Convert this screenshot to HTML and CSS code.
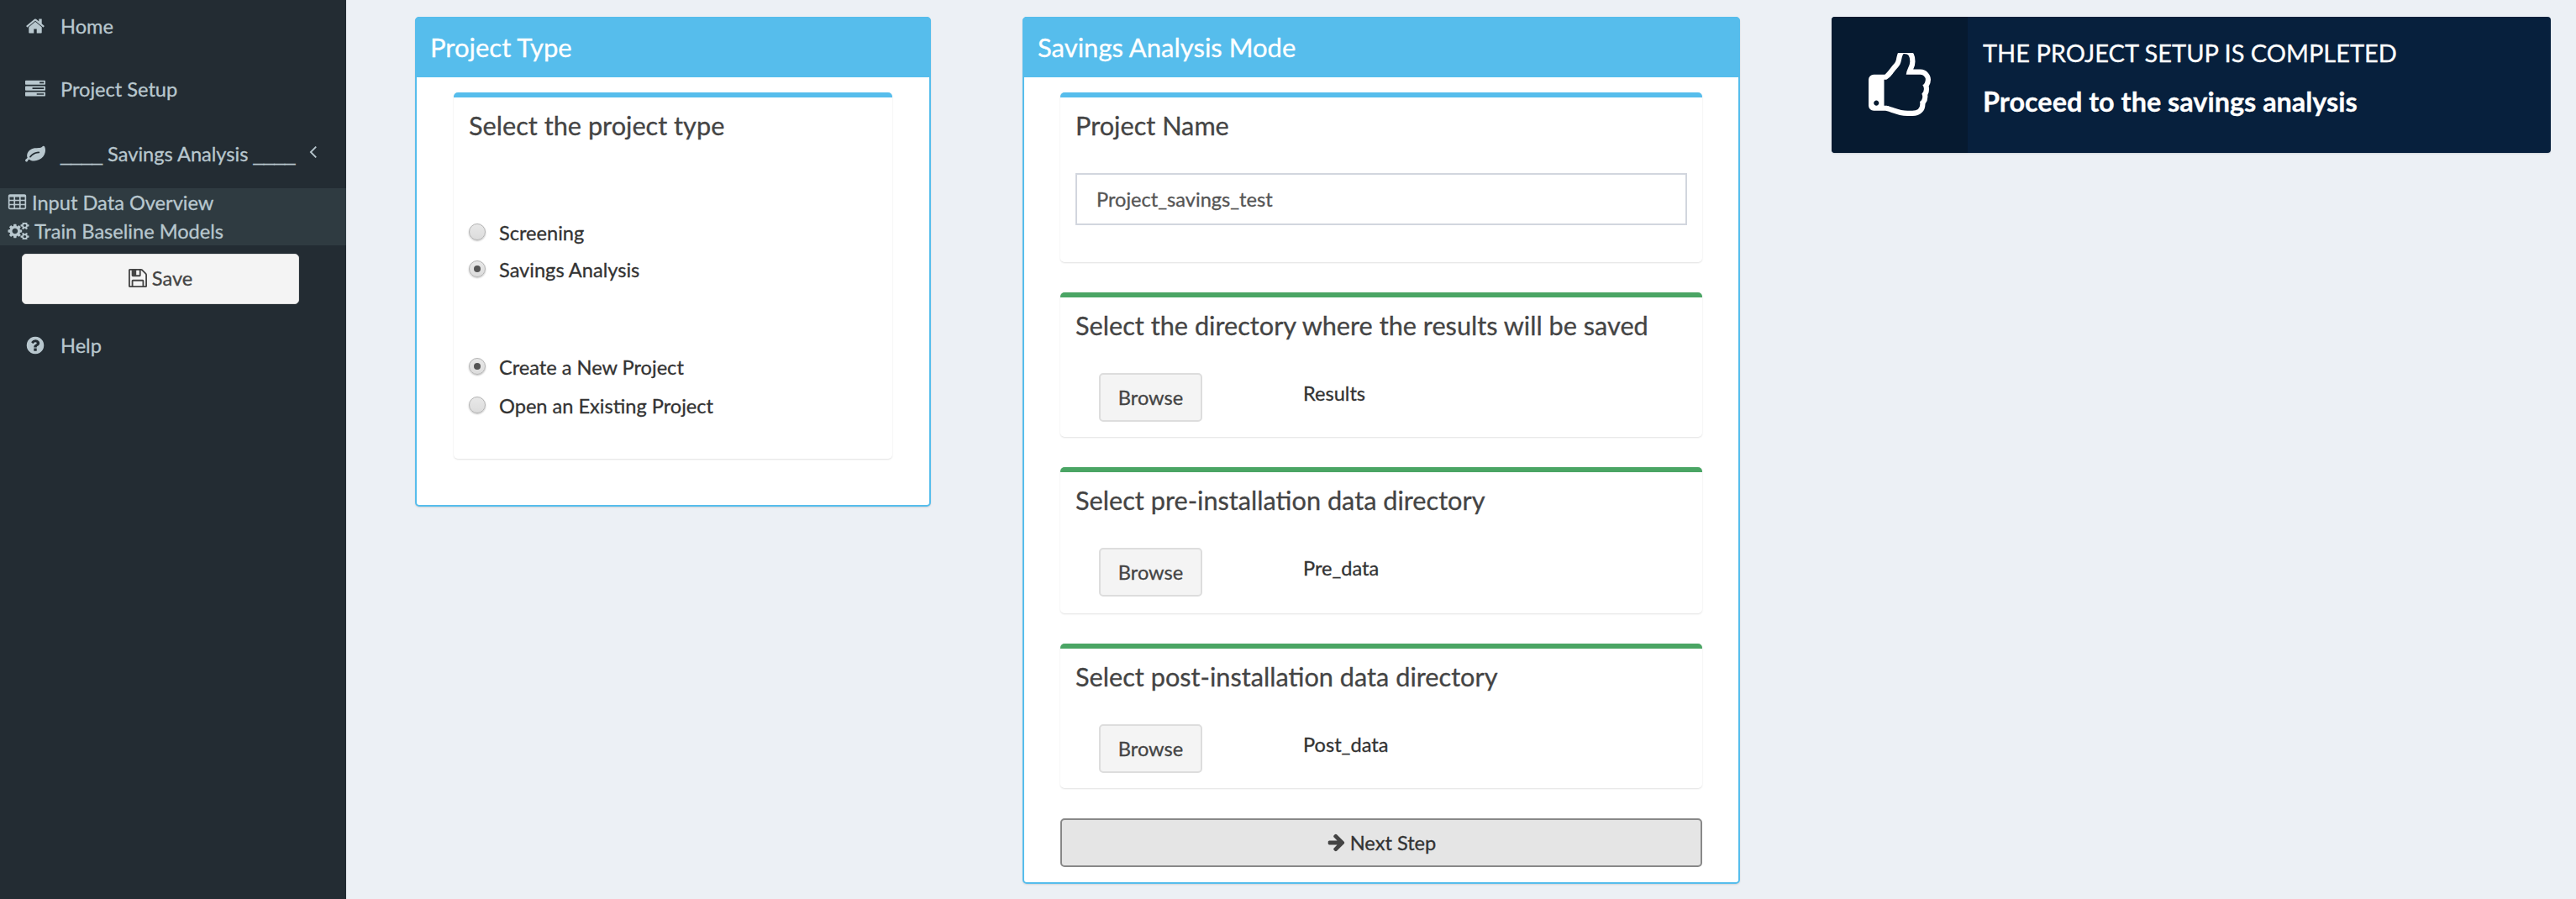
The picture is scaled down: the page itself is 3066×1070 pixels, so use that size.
FILE: index.html
```html
<!DOCTYPE html>
<html lang="en">
<head>
  <meta charset="UTF-8">
  <meta name="viewport" content="width=device-width, initial-scale=1">
  <title>Savings Analysis</title>
  <link rel="stylesheet" href="styles.css">
</head>
<body>
  <!-- sidebar -->
  <aside class="sidebar">
    <a class="menu-item item-home">
      <span class="menu-icon"><svg class="icon" viewBox="0 0 1792 1792"><path d="M1472 992v480q0 26-19 45t-45 19h-384v-384h-256v384h-384q-26 0-45-19t-19-45v-480q0-1 .5-3t.5-3l575-474 575 474q1 2 1 6zm223-69l-62 74q-8 9-21 11h-3q-13 0-21-7l-692-577-692 577q-12 8-24 7-13-2-21-11l-62-74q-8-10-7-23.500t11-21.500l719-599q32-26 76-26t76 26l244 204v-195q0-14 9-23t23-9h192q14 0 23 9t9 23v408l219 182q10 8 11 21.500t-7 23.500z"/></svg></span>
      Home
    </a>
    <a class="menu-item item-setup">
      <span class="menu-icon"><svg class="icon" viewBox="0 0 1792 1792"><path d="M1024 1408h640v-128h-640v128zm-384-512h1024v-128h-1024v128zm640-512h384v-128h-384v128zm512 832v256q0 26-19 45t-45 19h-1664q-26 0-45-19t-19-45v-256q0-26 19-45t45-19h1664q26 0 45 19t19 45zm0-512v256q0 26-19 45t-45 19h-1664q-26 0-45-19t-19-45v-256q0-26 19-45t45-19h1664q26 0 45 19t19 45zm0-512v256q0 26-19 45t-45 19h-1664q-26 0-45-19t-19-45v-256q0-26 19-45t45-19h1664q26 0 45 19t19 45z"/></svg></span>
      Project Setup
    </a>
    <a class="menu-item item-savings">
      <span class="menu-icon"><svg class="icon" viewBox="0 0 1792 1792"><path d="M1280 704q0-26-19-45t-45-19q-172 0-318 49.500t-259.500 134-235.500 219.500q-19 21-19 45 0 26 19 45t45 19q24 0 45-19 27-24 74-71t67-66q137-124 268.500-176t313.500-52q26 0 45-19t19-45zm512-198q0 95-20 193-46 224-184.500 383t-357.500 268q-214 108-438 108-148 0-286-47-15-5-88-42t-96-37q-16 0-39.500 32t-45 70-52.500 70-60 32q-30 0-51-11t-31-24-27-42q-2-4-6-11t-5.500-10-3-9.500-1.500-13.500q0-35 31-73.500t68-65.500 68-56 31-48q0-4-14-38t-16-44q-9-51-9-104 0-115 43.500-220t119-184.500 170.500-139 204-95.500q55-18 145-25.500t179.500-9 178.500-6 163.500-24 113.500-56.500l29.500-29.500 29.500-28 27-20 36.500-16 43.500-4.500q39 0 70.500 46t47.500 112 24 124 8 96z"/></svg></span>
      <span class="savings-label"><span class="rule">____</span> Savings Analysis <span class="rule">____</span></span>
      <svg class="chevron" viewBox="576 384 640 1152"><path d="M1203 544q0 13-10 23l-393 393 393 393q10 10 10 23t-10 23l-50 50q-10 10-23 10t-23-10l-466-466q-10-10-10-23t10-23l466-466q10-10 23-10t23 10l50 50q10 10 10 23z"/></svg>
    </a>
    <div class="submenu">
      <a class="sub-item">
        <svg class="sub-icon table-icon" viewBox="0 128 1792 1536"><path d="M576 1376v-192q0-14-9-23t-23-9h-320q-14 0-23 9t-9 23v192q0 14 9 23t23 9h320q14 0 23-9t9-23zm0-384v-192q0-14-9-23t-23-9h-320q-14 0-23 9t-9 23v192q0 14 9 23t23 9h320q14 0 23-9t9-23zm512 384v-192q0-14-9-23t-23-9h-320q-14 0-23 9t-9 23v192q0 14 9 23t23 9h320q14 0 23-9t9-23zm-512-768v-192q0-14-9-23t-23-9h-320q-14 0-23 9t-9 23v192q0 14 9 23t23 9h320q14 0 23-9t9-23zm512 384v-192q0-14-9-23t-23-9h-320q-14 0-23 9t-9 23v192q0 14 9 23t23 9h320q14 0 23-9t9-23zm512 384v-192q0-14-9-23t-23-9h-320q-14 0-23 9t-9 23v192q0 14 9 23t23 9h320q14 0 23-9t9-23zm-512-768v-192q0-14-9-23t-23-9h-320q-14 0-23 9t-9 23v192q0 14 9 23t23 9h320q14 0 23-9t9-23zm512 384v-192q0-14-9-23t-23-9h-320q-14 0-23 9t-9 23v192q0 14 9 23t23 9h320q14 0 23-9t9-23zm0-384v-192q0-14-9-23t-23-9h-320q-14 0-23 9t-9 23v192q0 14 9 23t23 9h320q14 0 23-9t9-23zm128-320v1088q0 66-47 113t-113 47h-1344q-66 0-113-47t-47-113v-1088q0-66 47-113t113-47h1344q66 0 113 47t47 113z"/></svg>
        Input Data Overview
      </a>
      <a class="sub-item">
        <svg class="sub-icon cogs-icon" viewBox="0 128 1920 1536"><path d="M896 896q0-106-75-181t-181-75-181 75-75 181 75 181 181 75 181-75 75-181zm768 512q0-52-38-90t-90-38-90 38-38 90q0 53 37.500 90.500t90.500 37.500 90.500-37.500 37.500-90.500zm0-1024q0-52-38-90t-90-38-90 38-38 90q0 53 37.500 90.500t90.500 37.500 90.500-37.500 37.500-90.500zm-384 421v185q0 10-7 19.500t-16 10.500l-155 24q-11 35-32 76 34 48 90 115 7 11 7 20 0 12-7 19-23 30-82.500 89.500t-78.500 59.500q-11 0-21-7l-115-90q-37 19-77 31-11 108-23 155-7 24-30 24h-186q-11 0-20-7.500t-10-17.500l-23-153q-34-10-75-31l-118 89q-7 7-20 7-11 0-21-8-144-133-144-160 0-9 7-19 10-14 41-53t47-61q-23-44-35-82l-152-24q-10-1-17-9.500t-7-19.500v-185q0-10 7-19.500t16-10.500l155-24q11-35 32-76-34-48-90-115-7-11-7-20 0-12 7-20 22-30 82-89t79-59q11 0 21 7l115 90q34-18 77-32 11-108 23-154 7-24 30-24h186q11 0 20 7.500t10 17.500l23 153q34 10 75 31l118-89q8-7 20-7 11 0 21 8 144 133 144 160 0 8-7 19-12 16-42 54t-45 60q23 48 34 82l152 23q10 2 17 10.500t7 19.500zm640 533v140q0 16-149 31-12 27-30 52 51 113 51 138 0 4-4 7-122 71-124 71-8 0-46-47t-52-68q-20 2-30 2t-30-2q-14 21-52 68t-46 47q-2 0-124-71-4-3-4-7 0-25 51-138-18-25-30-52-149-15-149-31v-140q0-16 149-31 13-29 30-52-51-113-51-138 0-4 4-7 4-2 35-20t59-34 30-16q8 0 46 46.500t52 67.500q20-2 30-2t30 2q51-71 92-112l6-2q4 0 124 70 4 3 4 7 0 25-51 138 17 23 30 52 149 15 149 31zm0-1024v140q0 16-149 31-12 27-30 52 51 113 51 138 0 4-4 7-122 71-124 71-8 0-46-47t-52-68q-20 2-30 2t-30-2q-14 21-52 68t-46 47q-2 0-124-71-4-3-4-7 0-25 51-138-18-25-30-52-149-15-149-31v-140q0-16 149-31 13-29 30-52-51-113-51-138 0-4 4-7 4-2 35-20t59-34 30-16q8 0 46 46.500t52 67.500q20-2 30-2t30 2q51-71 92-112l6-2q4 0 124 70 4 3 4 7 0 25-51 138 17 23 30 52 149 15 149 31z"/></svg>
        Train Baseline Models
      </a>
    </div>
    <button class="save-btn">
      <svg class="btn-icon" viewBox="0 128 1536 1536"><path d="M384 1536h768v-384h-768v384zm896 0h128v-896q0-14-10-38.500t-20-34.500l-281-281q-10-10-34-20t-39-10v416q0 40-28 68t-68 28h-576q-40 0-68-28t-28-68v-416h-128v1280h128v-416q0-40 28-68t68-28h832q40 0 68 28t28 68v416zm-384-928v-320q0-13-9.500-22.500t-22.500-9.500h-192q-13 0-22.500 9.500t-9.500 22.500v320q0 13 9.500 22.500t22.500 9.500h192q13 0 22.500-9.500t9.500-22.500zm640 32v928q0 40-28 68t-68 28h-1344q-40 0-68-28t-28-68v-1344q0-40 28-68t68-28h928q40 0 88 20t76 48l280 280q28 28 48 76t20 88z"/></svg>
      Save
    </button>
    <a class="menu-item item-help">
      <span class="menu-icon"><svg class="icon" viewBox="0 0 1792 1792"><path d="M1024 1376v-192q0-14-9-23t-23-9h-192q-14 0-23 9t-9 23v192q0 14 9 23t23 9h192q14 0 23-9t9-23zm256-672q0-88-55.500-163t-138.500-116-170-41q-243 0-371 213-15 24 8 42l132 100q7 6 19 6 16 0 25-12 53-68 86-92 34-24 86-24 48 0 85.500 26t37.500 59q0 38-20 61t-68 45q-63 28-115.500 86.500t-52.500 125.500v36q0 14 9 23t23 9h192q14 0 23-9t9-23q0-19 21.500-49.500t54.500-49.500q32-18 49-28.500t46-35 44.500-48 28-60.500 12.500-81zm384 192q0 209-103 385.500t-279.500 279.500-385.500 103-385.500-103-279.500-279.500-103-385.500 103-385.500 279.500-279.500 385.500-103 385.500 103 279.500 279.500 103 385.500z"/></svg></span>
      Help
    </a>
  </aside>

  <main class="content">
    <!-- project type -->
    <section class="panel panel-type">
      <h2 class="panel-title">Project Type</h2>
      <div class="panel-body type-body">
        <div class="box box-blue type-box">
          <h3 class="box-title">Select the project type</h3>
          <div class="radio-group first-group">
            <label class="radio-row"><input type="radio" name="kind"> Screening</label>
            <label class="radio-row"><input type="radio" name="kind" checked> Savings Analysis</label>
          </div>
          <div class="radio-group second-group">
            <label class="radio-row"><input type="radio" name="project" checked> Create a New Project</label>
            <label class="radio-row"><input type="radio" name="project"> Open an Existing Project</label>
          </div>
        </div>
      </div>
    </section>

    <!-- savings mode -->
    <section class="panel panel-mode">
      <h2 class="panel-title">Savings Analysis Mode</h2>
      <div class="panel-body mode-body">
        <div class="box box-blue name-box">
          <h3 class="box-title">Project Name</h3>
          <input class="name-input" type="text" value="Project_savings_test">
        </div>
        <div class="box box-green dir-box">
          <h3 class="box-title">Select the directory where the results will be saved</h3>
          <div class="dir-row">
            <button class="browse-btn">Browse</button>
            <span class="dir-name">Results</span>
          </div>
        </div>
        <div class="box box-green dir-box dir-tall">
          <h3 class="box-title">Select pre-installation data directory</h3>
          <div class="dir-row">
            <button class="browse-btn">Browse</button>
            <span class="dir-name">Pre_data</span>
          </div>
        </div>
        <div class="box box-green dir-box">
          <h3 class="box-title">Select post-installation data directory</h3>
          <div class="dir-row">
            <button class="browse-btn">Browse</button>
            <span class="dir-name">Post_data</span>
          </div>
        </div>
        <button class="next-btn">
          <svg class="btn-icon" viewBox="0 128 1664 1664"><path d="M1600 960q0 54-37 91l-651 651q-39 37-91 37-51 0-90-37l-75-75q-38-38-38-91t38-91l293-293h-704q-52 0-84.500-37.500t-32.500-90.500v-128q0-53 32.500-90.500t84.500-37.500h704l-293-294q-38-36-38-90t38-90l75-75q38-38 90-38 53 0 91 38l651 651q37 35 37 90z"/></svg>
          Next Step
        </button>
      </div>
    </section>

    <!-- status -->
    <section class="info-box">
      <div class="info-icon">
        <svg class="thumb" viewBox="128 128 1536 1536"><path d="M384 1344q0-26-19-45t-45-19-45 19-19 45 19 45 45 19 45-19 19-45zm1152-576q0-51-39-89.500t-89-38.500h-352q0-58 48-159.500t48-160.500q0-98-32-145t-128-47q-26 26-38 85t-30.500 125.500-59.500 109.500q-22 23-77 91-4 5-23 30t-31.500 41-34.500 42.500-40 44-38.500 35.500-40 27-35.500 9h-32v640h32q13 0 31.500 3t33 6.500 38 11 35 11.500 35.500 12.500 29 10.500q211 73 342 73h121q192 0 192-167 0-26-5-56 30-16 47.500-52.500t17.500-73.500-18-69q53-50 53-119 0-25-10-55.500t-25-47.500q32-1 53.500-47t21.500-81zm128-1q0 89-49 163 9 33 9 69 0 77-38 144 3 21 3 43 0 101-60 178 1 139-85 219.500t-227 80.500h-129q-96 0-189.500-22.500t-216.500-65.500q-116-40-138-40h-288q-53 0-90.500-37.500t-37.500-90.500v-640q0-53 37.500-90.500t90.500-37.500h274q36-24 137-155 58-75 107-128 24-25 35.500-85.500t30.500-126.500 62-108q39-37 90-37 84 0 151 32.500t102 101.500 35 186q0 93-48 192h176q104 0 180 76t76 179z"/></svg>
      </div>
      <div class="info-text">
        <p class="info-line">THE PROJECT SETUP IS COMPLETED</p>
        <p class="info-strong">Proceed to the savings analysis</p>
      </div>
    </section>
  </main>
</body>
</html>
```

FILE: styles.css
```css
/* base */
* {
  box-sizing: border-box;
}

html,
body {
  height: 100%;
}

body {
  margin: 0;
  display: flex;
  background: #ecf0f5;
  color: #333;
  font-family: "Lato", "Noto Sans", sans-serif;
  font-size: 23.6px;
  -webkit-text-stroke: 0.3px;
  overflow: hidden;
}

h2,
h3,
p {
  margin: 0;
  font-weight: 400;
}

/* sidebar */
.sidebar {
  flex: 0 0 412px;
  background: #232c33;
  color: #b8c7ce;
}

.menu-item {
  display: flex;
  align-items: center;
  height: 64px;
  padding: 0 0 3px 30px;
}

.item-setup {
  margin-top: 11px;
}

.item-savings {
  margin-top: 14px;
}

.item-help {
  margin-top: 18px;
}

.menu-icon {
  flex: 0 0 42px;
  display: flex;
}

.icon {
  width: 24px;
  height: 24px;
  fill: #b8c7ce;
}

.savings-label {
  flex: 0 0 283px;
  white-space: nowrap;
}

/* Lato's underscores leave gaps, these need to read as one line */
.rule {
  font-family: "Liberation Sans", sans-serif;
  font-size: 22.5px;
}

.chevron {
  width: 9px;
  height: 16px;
  margin: -6px 0 0 13px;
  fill: #b8c7ce;
}

.submenu {
  margin-top: 7px;
  height: 68px;
  background: #2f3b41;
}

.sub-item {
  display: flex;
  align-items: center;
  gap: 6px;
  height: 34px;
  padding-left: 9px;
}

.sub-icon {
  height: 20px;
  fill: #b8c7ce;
}

.table-icon {
  width: 23px;
}

.cogs-icon {
  width: 26px;
}

.save-btn {
  display: flex;
  align-items: center;
  justify-content: center;
  gap: 6px;
  width: 330px;
  height: 60px;
  margin: 10px 0 0 26px;
  padding-bottom: 3px;
  background: #f4f4f4;
  border: 1px solid #ddd;
  border-radius: 5px;
  color: #444;
  font: inherit;
}

.btn-icon {
  width: 22px;
  height: 22px;
  fill: #444;
}

/* main columns */
.content {
  flex: 1;
  display: grid;
  grid-template-columns: 614px 854px 856px;
  column-gap: 109px;
  align-items: start;
  padding: 20px 0 0 82px;
}

.panel {
  background: #fff;
  border: 2px solid #56bdec;
  border-radius: 5px;
  box-shadow: 0 1px 2px rgba(0, 0, 0, 0.12);
}

.panel-type {
  height: 583px;
}

.panel-mode {
  height: 1032px;
}

.panel-title {
  display: flex;
  align-items: center;
  height: 72px;
  padding: 0 18px;
  margin: -2px -2px 0;
  background: #56bdec;
  border-radius: 5px 5px 0 0;
  color: #fff;
  font-size: 31px;
}

.type-body {
  padding: 18px 44px 0;
}

.mode-body {
  padding: 18px 43px 0;
}

/* inner boxes */
.box {
  background: #fff;
  border-top: 6px solid #56bdec;
  border-radius: 5px;
  box-shadow: 0 1px 2px rgba(0, 0, 0, 0.12);
}

.box-green {
  border-top-color: #4aa564;
}

.box-title {
  font-size: 30.7px;
  line-height: 40px;
  color: #444;
  padding: 14px 18px 0;
}

.type-box {
  height: 436px;
}

.radio-group {
  display: flex;
  flex-direction: column;
  gap: 12px;
  padding-left: 18px;
}

.first-group {
  margin-top: 91px;
}

.second-group {
  margin-top: 84px;
  gap: 14px;
}

.radio-row {
  display: flex;
  align-items: center;
  gap: 16px;
  height: 32px;
  color: #333;
}

.radio-row input {
  appearance: none;
  width: 20px;
  height: 20px;
  margin: -3px 0 0;
  border: 1px solid #b4b4b4;
  border-radius: 50%;
  background: linear-gradient(#e8e8e8, #dcdcdc);
  box-shadow: 0 1px 2px rgba(0, 0, 0, 0.25);
  display: grid;
  place-content: center;
}

.radio-row input:checked::before {
  content: "";
  width: 8px;
  height: 8px;
  border-radius: 50%;
  background: #555;
}

.name-box {
  height: 202px;
  padding-bottom: 1px;
}

.name-input {
  display: block;
  width: 728px;
  height: 62px;
  margin: 36px 0 0 18px;
  padding: 0 23px;
  border: 2px solid #d2d6de;
  font: inherit;
  color: #555;
  outline: none;
}

.dir-box {
  margin-top: 36px;
  height: 172px;
}

.dir-tall {
  height: 174px;
}

.dir-row {
  display: flex;
  align-items: flex-start;
  margin-top: 36px;
  padding-left: 46px;
}

.browse-btn {
  width: 123px;
  height: 58px;
  background: #f4f4f4;
  border: 2px solid #ddd;
  border-radius: 5px;
  color: #444;
  font: inherit;
}

.dir-name {
  margin: 10px 0 0 120px;
  color: #333;
}

.next-btn {
  display: flex;
  align-items: center;
  justify-content: center;
  gap: 6px;
  width: 764px;
  height: 58px;
  margin-top: 36px;
  background: #e5e5e5;
  border: 2px solid #888;
  border-radius: 5px;
  color: #333;
  font: inherit;
}

/* status box */
.info-box {
  display: flex;
  height: 162px;
  background: #07203d;
  border-radius: 4px;
  box-shadow: 0 1px 2px rgba(0, 0, 0, 0.12);
  color: #fff;
}

.info-icon {
  flex: 0 0 162px;
  display: flex;
  align-items: center;
  justify-content: center;
  background: #061a30;
  border-radius: 4px 0 0 4px;
}

.thumb {
  width: 74px;
  height: 76px;
  fill: #fff;
}

.info-text {
  padding: 25px 18px 0;
}

.info-line {
  font-size: 29px;
  line-height: 36px;
}

.info-strong {
  margin-top: 22px;
  font-size: 32.4px;
  line-height: 36px;
  font-weight: 700;
}
```
